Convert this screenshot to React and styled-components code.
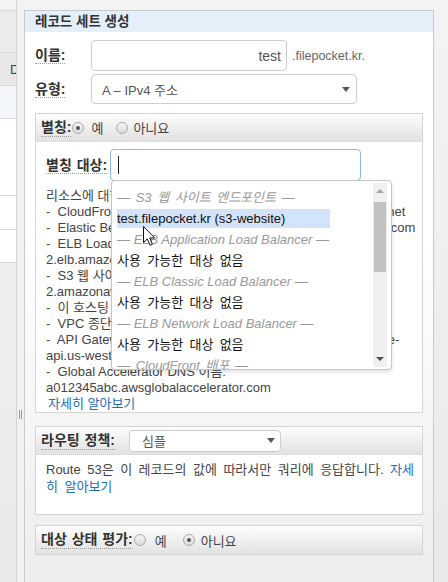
import React from 'react'
import styled, { createGlobalStyle } from 'styled-components'

const GlobalStyle = createGlobalStyle`
  html, body {
    margin: 0;
    padding: 0;
  }
  body {
    width: 448px;
    height: 582px;
    overflow: hidden;
    font-family: 'Liberation Sans', 'Noto Sans CJK KR', sans-serif;
    font-size: 13px;
    color: #333;
  }
`

const Page = styled.div`
  display: flex;
  height: 582px;
  overflow: hidden;
  background: linear-gradient(#f3f3f3, #e9e9e9);
`

const LeftPane = styled.div`
  flex: none;
  width: 16px;
  padding-top: 10px;
  border-right: 1px solid #d3d3d3;
  overflow: hidden;
`

const TableCell = styled.div`
  height: ${p => p.$h}px;
  box-sizing: border-box;
  border-top: 1px solid #d8d8d8;
  background: ${p => p.$bg || 'transparent'};
  padding-left: 10px;
  line-height: ${p => p.$h}px;
  font-size: 13px;
  color: #444;
  white-space: nowrap;
`

const Splitter = styled.div`
  flex: none;
  width: 7px;
  box-sizing: border-box;
  padding-top: 410px;
  display: flex;
  justify-content: center;
  align-items: flex-start;
  background: #f1f1f1;
`

const Grip = styled.span`
  width: 1px;
  height: 9px;
  border-left: 1px solid #999;
  border-right: 1px solid #999;
`

const Panel = styled.div`
  flex: none;
  width: 410px;
  box-sizing: border-box;
  margin-top: 10px;
  border: 1px solid #c9c9c9;
  border-bottom: none;
  background: linear-gradient(#fff 0, #fff 40%, #ededed 100%);
`

const PanelTitle = styled.div`
  height: 21px;
  line-height: 21px;
  padding: 0 10px;
  background: #e5effa;
  font-size: 13.5px;
  font-weight: bold;
  color: #333;
`

const PanelBody = styled.div`
  padding: 8px 10px 0;
`

const FieldRow = styled.div`
  display: flex;
  align-items: center;
  margin-top: ${p => p.$gap || 0}px;
`

const FieldLabel = styled.div`
  flex: none;
  width: ${p => p.$w}px;
`

const LabelText = styled.span`
  font-weight: bold;
  font-size: 14px;
  word-spacing: 1px;
  color: #333;
  line-height: 17px;
  border-bottom: 1px dotted #9a9a9a;
  white-space: nowrap;
`

const TextInput = styled.input`
  width: 196px;
  height: 31px;
  box-sizing: border-box;
  border: 1px solid #ccc;
  border-radius: 4px;
  padding: 0 5px;
  text-align: right;
  font-family: 'Liberation Sans', sans-serif;
  font-size: 14px;
  color: #555;
  background: #fff;
  outline: none;
`

const Suffix = styled.span`
  margin-left: 5px;
  font-size: 12.5px;
  color: #666;
`

const SelectBox = styled.div`
  width: ${p => p.$w}px;
  height: ${p => p.$h}px;
  box-sizing: border-box;
  flex: none;
  display: flex;
  align-items: center;
  justify-content: space-between;
  margin-left: ${p => p.$ml || 0}px;
  padding: 0 ${p => p.$pr}px 0 ${p => p.$pl}px;
  border: 1px solid #ccc;
  border-radius: 4px;
  background: #fff;
  color: #555;
  font-size: 13px;
`

const Caret = styled.span`
  width: 0;
  height: 0;
  border-left: 4px solid transparent;
  border-right: 4px solid transparent;
  border-top: 5px solid #555;
`

const Section = styled.div`
  margin-top: ${p => p.$gap}px;
  border: 1px solid #d4d4d4;
  background: #fff;
`

const SectionHead = styled.div`
  height: 28px;
  box-sizing: border-box;
  display: flex;
  align-items: center;
  padding-left: 5px;
  background: linear-gradient(#fdfdfd, #e2e2e2);
  border-bottom: ${p => (p.$last ? 'none' : '1px solid #dcdcdc')};
`

const SectionBody = styled.div`
  padding: ${p => p.$pad};
`

const RadioOption = styled.span`
  display: inline-flex;
  align-items: center;
  margin-left: ${p => p.$gap}px;
  color: #444;
  font-size: 13px;
`

const Radio = styled.span`
  width: 12px;
  height: 12px;
  box-sizing: border-box;
  margin-right: ${p => p.$gap}px;
  border-radius: 50%;
  border: 1px solid #a9a9a9;
  background: linear-gradient(#f6f6f6, #dcdcdc);
  display: inline-flex;
  align-items: center;
  justify-content: center;

  &::after {
    content: '';
    width: 4px;
    height: 4px;
    border-radius: 50%;
    background: ${p => (p.$on ? '#555' : 'transparent')};
  }
`

const TargetField = styled.div`
  position: relative;
  width: 251px;
  height: 32px;
  box-sizing: border-box;
  border: 1px solid #8bb8e8;
  border-radius: 4px;
  background: #fff;
  display: flex;
  align-items: center;
  padding-left: 7px;
`

const TextCaret = styled.span`
  width: 1px;
  height: 18px;
  background: #222;
`

const Dropdown = styled.div`
  position: absolute;
  top: 100%;
  left: 0;
  z-index: 5;
  width: 281px;
  height: 190px;
  box-sizing: border-box;
  display: flex;
  background: #fff;
  border: 1px solid #c6c6c6;
  border-radius: 4px;
  box-shadow: 0 2px 4px rgba(0, 0, 0, 0.12);
  overflow: hidden;
`

const OptionList = styled.div`
  flex: 1;
  overflow: hidden;
  padding: 6px 0 0 5px;
`

const GroupLabel = styled.div`
  height: 21px;
  line-height: 21px;
  font-style: italic;
  color: #999;
  white-space: nowrap;
  word-spacing: ${p => (p.$ko ? '2px' : '0')};
`

const Option = styled.div`
  width: ${p => (p.$active ? '213px' : 'auto')};
  height: 19px;
  line-height: 19px;
  margin: 1px 0;
  color: #111;
  white-space: nowrap;
  word-spacing: ${p => (p.$active ? '0' : '2.7px')};
  background: ${p => (p.$active ? '#d3e3fb' : 'transparent')};
`

const ScrollTrack = styled.div`
  flex: none;
  width: 14px;
  margin: 2px 4px 2px 0;
  display: flex;
  flex-direction: column;
  background: #f0f0f0;
`

const ScrollArrow = styled.div`
  height: 16px;
  display: flex;
  align-items: center;
  justify-content: center;

  &::after {
    content: '';
    width: 0;
    height: 0;
    border-left: 4px solid transparent;
    border-right: 4px solid transparent;
    ${p => (p.$down ? 'border-top: 4px solid #505050;' : 'border-bottom: 4px solid #a3a3a3;')}
  }
`

const ScrollThumb = styled.div`
  height: 70px;
  margin: 3px 1px 0;
  background: #c1c1c1;
`

const ScrollFill = styled.div`
  flex: 1;
`

const Pointer = styled.svg`
  position: absolute;
  left: 31px;
  top: 45px;
  z-index: 6;
`

const HelpText = styled.div`
  margin-top: ${p => p.$gap || 0}px;
  line-height: ${p => p.$lh}px;
  color: #444;
  font-size: 13px;
  word-spacing: ${p => p.$ws || 0}px;
`

const HelpLine = styled.div`
  white-space: pre;
`

const Link = styled.span`
  color: #1f6cb7;
  margin-left: ${p => p.$indent || 0}px;
`

const RightGutter = styled.div`
  flex: 1;
`

const descLines = [
  '리소스에 대한 DNS 이름을 입력하거나 선택하십시오:',
  '-  CloudFront 배포 도메인 이름: d1111110abcdef8.cloudfront.net',
  '-  Elastic Beanstalk 환경 CNAME: example.elasticbeanstalk.com',
  '-  ELB Load Balancer DNS 이름: example-1.us-east-',
  '2.elb.amazonaws.com',
  '-  S3 웹 사이트 엔드포인트: s3-website.us-east-',
  '2.amazonaws.com',
  '-  이 호스팅 영역의 레코드 세트: www.example.com',
  '-  VPC 종단점: example.us-east-2.vpce.amazonaws.com',
  '-  API Gateway 사용자 지정 리전 API: d-abcdef12345.execute-',
  'api.us-west-2.amazonaws.com',
  '-  Global Accelerator DNS 이름:',
  'a012345abc.awsglobalaccelerator.com',
]

const targets = [
  { group: 'S3 웹 사이트 엔드포인트', ko: true, items: ['test.filepocket.kr (s3-website)'] },
  { group: 'ELB Application Load Balancer', items: ['사용 가능한 대상 없음'] },
  { group: 'ELB Classic Load Balancer', items: ['사용 가능한 대상 없음'] },
  { group: 'ELB Network Load Balancer', items: ['사용 가능한 대상 없음'] },
  { group: 'CloudFront 배포', ko: true, items: [] },
]

function RadioChoice({ on, label, gap, inner }) {
  return (
    <RadioOption $gap={gap}>
      <Radio $on={on} $gap={inner} />
      {label}
    </RadioOption>
  )
}

export default function App() {
  return (
    <>
      <GlobalStyle />
      <Page>
        <LeftPane>
          <TableCell $h={42} $bg="#ebebeb" />
          <TableCell $h={33} $bg="#e8e8e8">D</TableCell>
          <TableCell $h={33} $bg="#f3f7fb" />
          <TableCell $h={77} $bg="#fff" />
          <TableCell $h={34} $bg="#fff" />
          <TableCell $h={33} $bg="#fff" />
          <TableCell $h={20} />
        </LeftPane>

        <Splitter>
          <Grip />
        </Splitter>

        <Panel>
          <PanelTitle>레코드 세트 생성</PanelTitle>
          <PanelBody>
            <FieldRow>
              <FieldLabel $w={56}>
                <LabelText>이름:</LabelText>
              </FieldLabel>
              <TextInput value="test" readOnly />
              <Suffix>.filepocket.kr.</Suffix>
            </FieldRow>

            <FieldRow $gap={3}>
              <FieldLabel $w={56}>
                <LabelText>유형:</LabelText>
              </FieldLabel>
              <SelectBox $w={266} $h={30} $pl={10} $pr={6}>
                A – IPv4 주소
                <Caret />
              </SelectBox>
            </FieldRow>

            <Section $gap={9}>
              <SectionHead>
                <LabelText>별칭:</LabelText>
                <RadioChoice on label="예" gap={1} inner={7} />
                <RadioChoice label="아니요" gap={13} inner={5} />
              </SectionHead>
              <SectionBody $pad="7px 10px 0">
                <FieldRow>
                  <FieldLabel $w={64}>
                    <LabelText>별칭 대상:</LabelText>
                  </FieldLabel>
                  <TargetField>
                    <TextCaret />
                    <Dropdown>
                      <OptionList>
                        {targets.map(t => (
                          <React.Fragment key={t.group}>
                            <GroupLabel $ko={t.ko}>— {t.group} —</GroupLabel>
                            {t.items.map((item, i) => (
                              <Option key={i} $active={item.startsWith('test')}>
                                {item}
                              </Option>
                            ))}
                          </React.Fragment>
                        ))}
                      </OptionList>
                      <ScrollTrack>
                        <ScrollArrow />
                        <ScrollThumb />
                        <ScrollFill />
                        <ScrollArrow $down />
                      </ScrollTrack>
                      <Pointer width="13" height="21" viewBox="0 0 13 21">
                        <path
                          d="M0.5 0.5 L0.5 16.5 L4.3 12.9 L7 19.3 L9.4 18.3 L6.8 12 L11.8 12 Z"
                          fill="#fff"
                          stroke="#111"
                          strokeWidth="1"
                          strokeLinejoin="round"
                        />
                      </Pointer>
                    </Dropdown>
                  </TargetField>
                </FieldRow>
                <HelpText $gap={7} $lh={16}>
                  {descLines.map((line, i) => (
                    <HelpLine key={i}>{line}</HelpLine>
                  ))}
                  <HelpLine>
                    <Link $indent={2}>자세히 알아보기</Link>
                  </HelpLine>
                </HelpText>
              </SectionBody>
            </Section>

            <Section $gap={13}>
              <SectionHead>
                <LabelText>라우팅 정책:</LabelText>
                <SelectBox $w={152} $h={22} $pl={12} $pr={5} $ml={14}>
                  심플
                  <Caret />
                </SelectBox>
              </SectionHead>
              <SectionBody $pad="6px 10px 19px">
                <HelpText $lh={17} $ws={2.9}>
                  <HelpLine>
                    Route 53은 이 레코드의 값에 따라서만 쿼리에 응답합니다. <Link>자세</Link>
                  </HelpLine>
                  <HelpLine>
                    <Link>히 알아보기</Link>
                  </HelpLine>
                </HelpText>
              </SectionBody>
            </Section>

            <Section $gap={10}>
              <SectionHead $last>
                <LabelText>대상 상태 평가:</LabelText>
                <RadioChoice label="예" gap={1} inner={9} />
                <RadioChoice on label="아니요" gap={16} inner={6} />
              </SectionHead>
            </Section>
          </PanelBody>
        </Panel>

        <RightGutter />
      </Page>
    </>
  )
}
